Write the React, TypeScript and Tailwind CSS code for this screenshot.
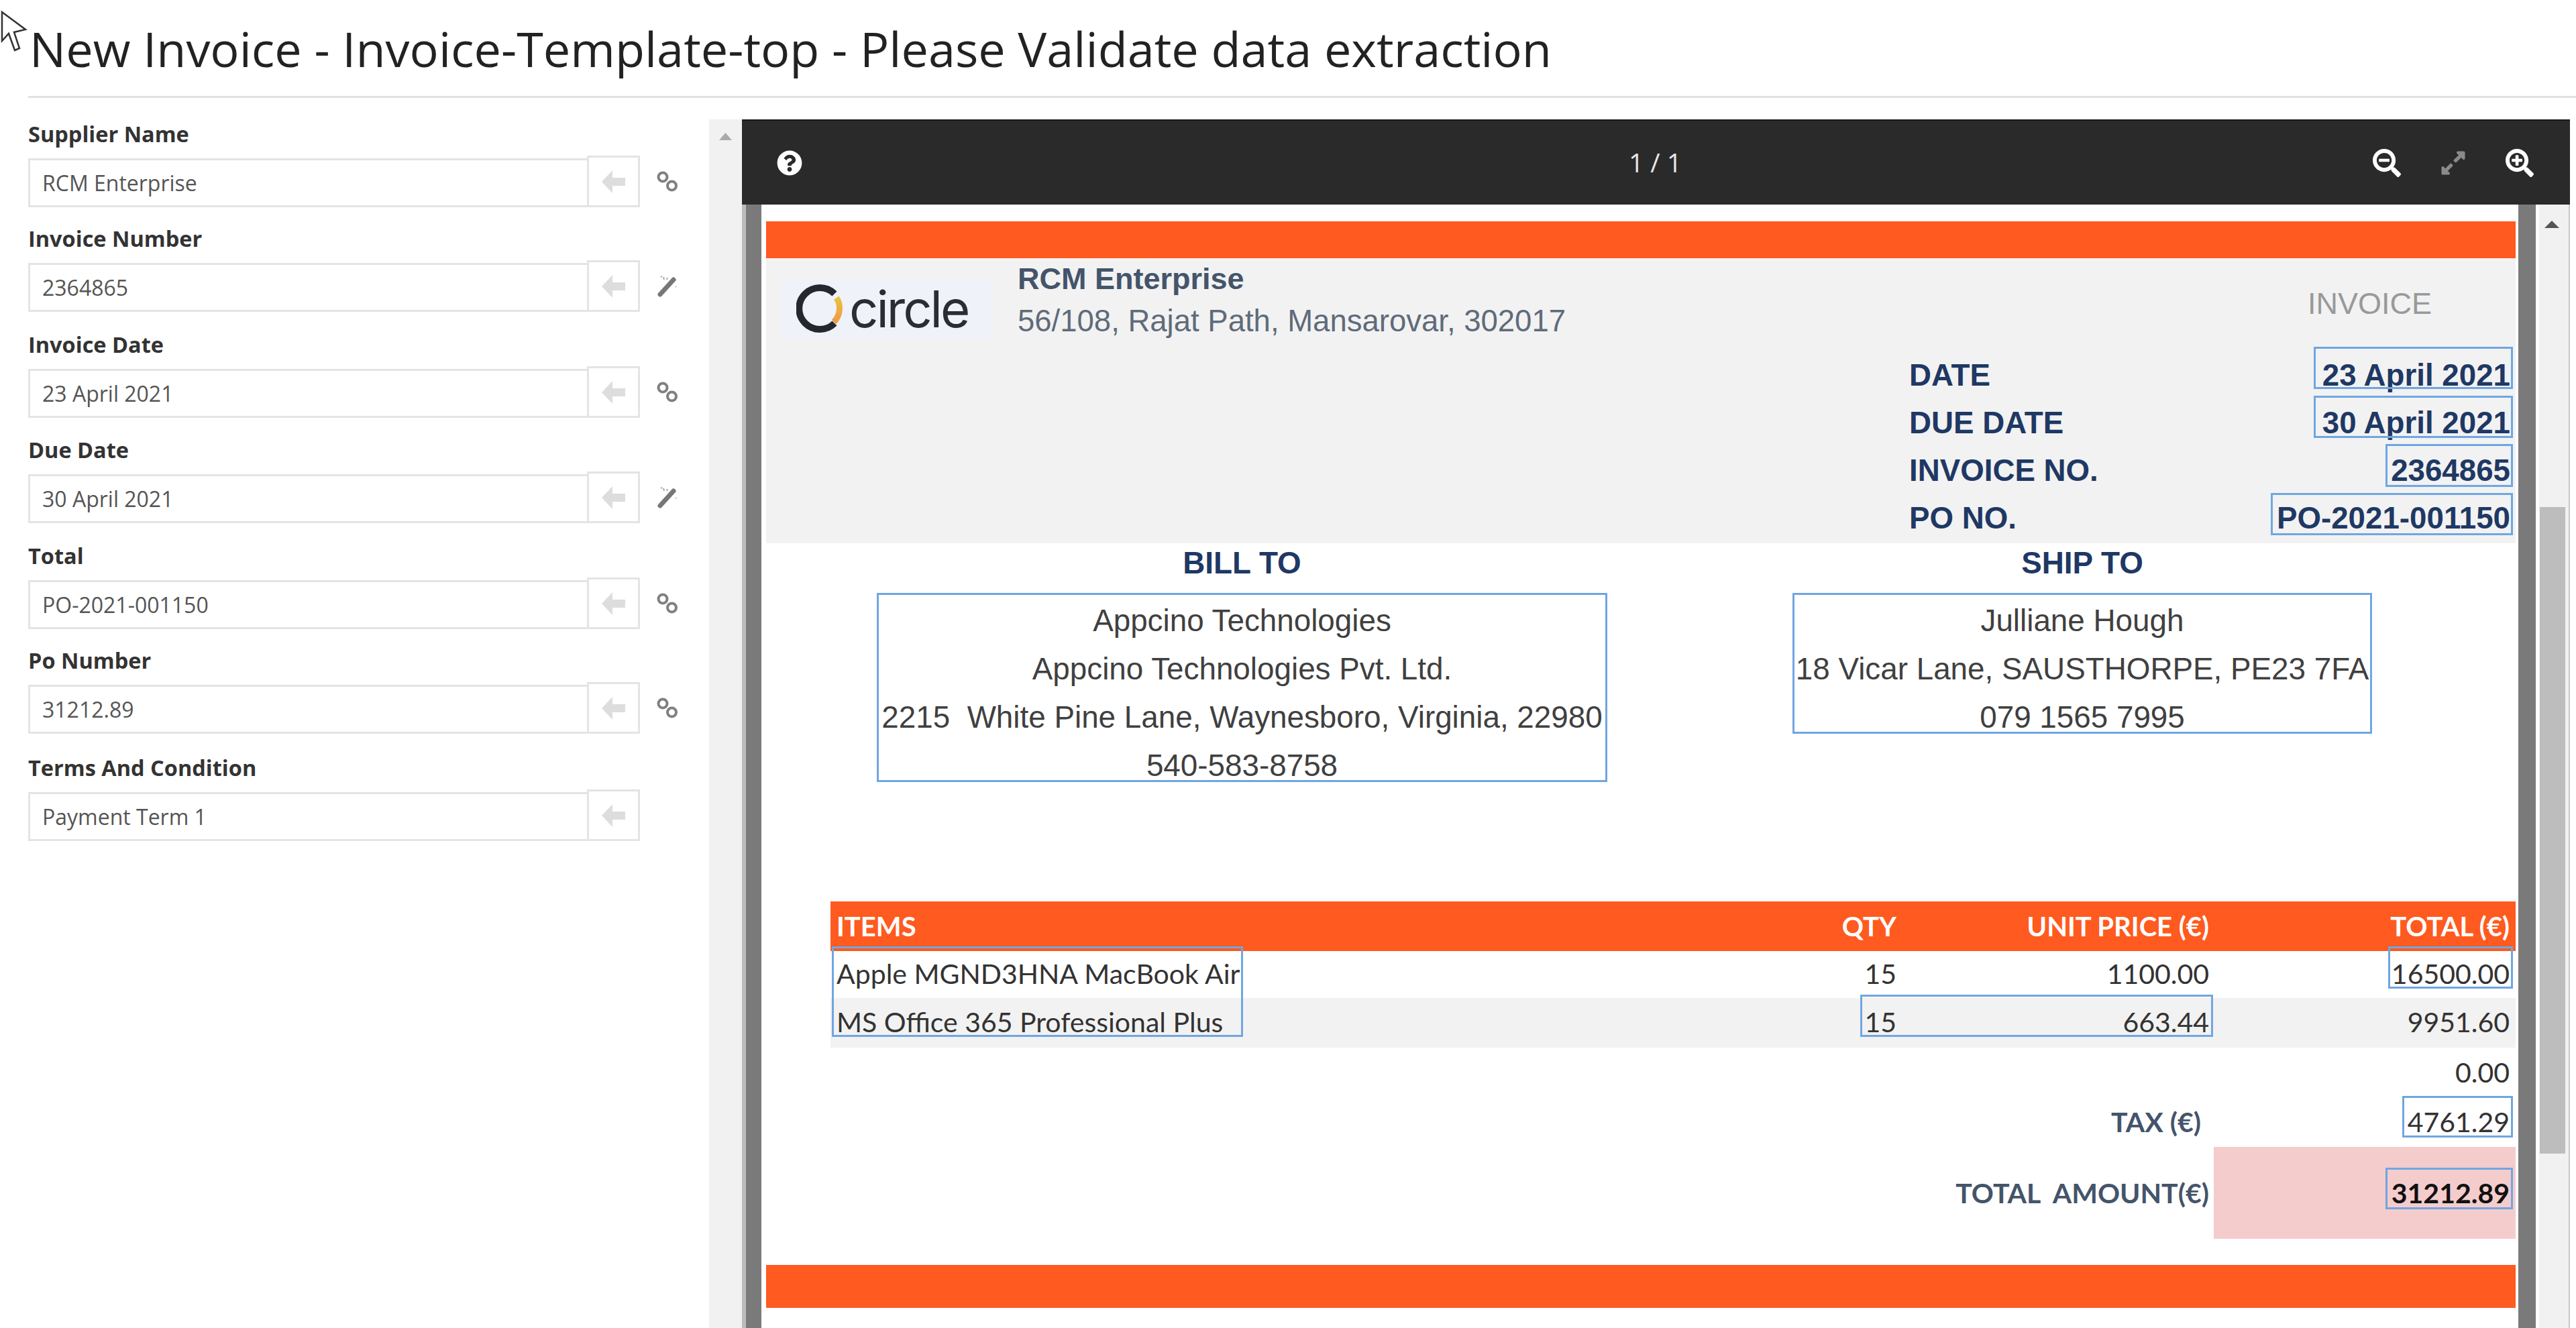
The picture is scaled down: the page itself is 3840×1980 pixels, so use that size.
import React from "react";
import { FaQuestionCircle, FaSearchMinus, FaSearchPlus, FaExpandAlt } from "react-icons/fa";

const fields = [
  { label: "Supplier Name", value: "RCM Enterprise", icon: "link", mt: "mt-[2px]" },
  { label: "Invoice Number", value: "2364865", icon: "wand", mt: "mt-[27px]" },
  { label: "Invoice Date", value: "23 April 2021", icon: "link", mt: "mt-[29px]" },
  { label: "Due Date", value: "30 April 2021", icon: "wand", mt: "mt-[28px]" },
  { label: "Total", value: "PO-2021-001150", icon: "link", mt: "mt-[29px]" },
  { label: "Po Number", value: "31212.89", icon: "link", mt: "mt-[27px]" },
  { label: "Terms And Condition", value: "Payment Term 1", icon: "", mt: "mt-[31px]" },
];

const boxes = [
  "left-[2314px] top-[212px] w-[297px] h-[63px]",
  "left-[2314px] top-[285px] w-[297px] h-[63px]",
  "left-[2421px] top-[357px] w-[190px] h-[64px]",
  "left-[2250px] top-[430px] w-[361px] h-[63px]",
  "left-[172px] top-[579px] w-[1089px] h-[282px]",
  "left-[1537px] top-[579px] w-[864px] h-[210px]",
  "left-[105px] top-[1106px] w-[613px] h-[135px]",
  "left-[2425px] top-[1106px] w-[186px] h-[63px]",
  "left-[1638px] top-[1178px] w-[526px] h-[63px]",
  "left-[2446px] top-[1329px] w-[165px] h-[62px]",
  "left-[2421px] top-[1436px] w-[190px] h-[62px]",
];

const meta = [
  ["DATE", "23 April 2021"],
  ["DUE DATE", "30 April 2021"],
  ["INVOICE NO.", "2364865"],
  ["PO NO.", "PO-2021-001150"],
];

const LinkIcon = () => (
  <svg width="31" height="31" viewBox="0 0 31 31" fill="none" stroke="#808080" strokeWidth="4">
    <circle cx="9" cy="9" r="6.5" />
    <circle cx="22.5" cy="22" r="6.5" />
  </svg>
);

const WandIcon = () => (
  <svg width="29" height="33" viewBox="0 0 29 33" fill="none">
    <path d="M4 29 L24 7" stroke="#777777" strokeWidth="7" strokeLinecap="round" />
    <path d="M9 3 L10 7 M5 2 L7 3 M15 4 L14 7 M27 17 L28 18" stroke="#aaaaaa" strokeWidth="2" />
  </svg>
);

const BackArrow = () => (
  <svg width="35" height="34" viewBox="0 0 35 34" fill="#dddddd">
    <path d="M0 17 L16 0 L16 11 L35 11 L35 23 L16 23 L16 34 Z" />
  </svg>
);

const Field = ({ label, value, icon, mt }: { label: string; value: string; icon: string; mt: string }) => (
  <div className={mt}>
    <div className="h-[40px] mb-[12px] flex items-center text-[32.5px] font-bold text-[#333333] leading-none">{label}</div>
    <div className="flex items-center h-[77px]">
      <div className="w-[833px] h-[73px] mt-[4px] border-[3px] border-r-0 border-[#e4e4e4] pl-[18px] flex items-center text-[32px] text-[#555555]">
        {value}
      </div>
      <div className="w-[79px] h-[77px] border-[3px] border-[#e4e4e4] flex items-center justify-center">
        <BackArrow />
      </div>
      <div className="ml-[25px] w-[31px] flex items-center justify-center">
        {icon === "link" && <LinkIcon />}
        {icon === "wand" && <WandIcon />}
      </div>
    </div>
  </div>
);

const Logo = () => (
  <div className="mt-[30px] w-[312px] h-[90px] bg-[#eff2f9] flex items-center pl-[22px]">
    <svg width="72" height="72" viewBox="0 0 72 72" fill="none">
      <defs>
        <linearGradient id="ring" x1="0" y1="0" x2="0" y2="1">
          <stop offset="0" stopColor="#e8c33f" />
          <stop offset="1" stopColor="#ee9a44" />
        </linearGradient>
      </defs>
      <path d="M57 14 A31 31 0 1 0 57 58" stroke="#24272f" strokeWidth="10" />
      <path d="M60 20 A29 29 0 0 1 56 56" stroke="url(#ring)" strokeWidth="9" />
    </svg>
    <span className="ml-[7px] font-['Inter',sans-serif] text-[76px] leading-none tracking-[-3px] text-[#2a2d36]">circle</span>
  </div>
);

const Row = ({
  item,
  qty,
  unit,
  total,
  cls,
}: {
  item?: string;
  qty?: string;
  unit?: string;
  total?: string;
  cls: string;
}) => (
  <div className={`flex items-center pr-[9px] ${cls}`}>
    <div className="flex-1 pl-[9px]">{item}</div>
    <div className="w-[150px] text-right">{qty}</div>
    <div className="w-[466px] text-right">{unit}</div>
    <div className="w-[448px] text-right">{total}</div>
  </div>
);

export default function App() {
  return (
    <div className="relative w-[3840px] h-[1980px] overflow-hidden bg-white font-['Open_Sans',sans-serif]">
      <svg className="absolute left-0 top-[15px]" width="42" height="64" viewBox="0 0 42 64" fill="#ffffff" stroke="#333333" strokeWidth="2.5">
        <path d="M3 3 L3 46 L13 35 L22 60 L29 57 L21 33 L38 29 Z" />
      </svg>

      <header className="h-[146px] ml-[42px] border-b-[3px] border-[#e0e0e0] flex items-center pl-[2px]">
        <h1 className="text-[72px] font-medium leading-none text-[#222222]">New Invoice - Invoice-Template-top - Please Validate data extraction</h1>
      </header>

      <div className="flex h-[1834px] pt-[32px]">
        <aside className="w-[1057px] pl-[42px]">
          {fields.map((f) => (
            <Field key={f.label} {...f} />
          ))}
        </aside>

        <div className="w-[49px] bg-[#f1f1f1] pt-[20px] pl-[15px]">
          <svg width="19" height="11" viewBox="0 0 19 11" fill="#aaaaaa">
            <path d="M9.5 0 L19 11 L0 11 Z" />
          </svg>
        </div>

        <main className="w-[2725px] flex flex-col font-['Liberation_Sans',Arial,sans-serif]">
          <div className="h-[127px] shrink-0 bg-[#2a2a2a] border-t-[2px] border-[#1a1a1a] flex items-center justify-between pl-[52px] pr-[54px] text-white">
            <FaQuestionCircle className="text-[38px]" />
            <div className="ml-[202px] font-['Open_Sans',sans-serif] text-[39px] text-[#e6e6e6]">1 / 1</div>
            <div className="flex items-center gap-[58px]">
              <FaSearchMinus className="text-[42px]" />
              <FaExpandAlt className="text-[40px] text-[#8a8a8a]" />
              <FaSearchPlus className="text-[42px]" />
            </div>
          </div>

          <div className="flex flex-1 min-h-0">
            <div className="w-[29px] bg-[#7a7a7a] border-l-[6px] border-[#bbbbbb]" />

            <div className="relative w-[2619px] pl-[7px] pt-[25px] bg-white overflow-hidden">
              <div className="w-[2608px] h-[55px] bg-[#ff5a1f]" />

              <section className="w-[2608px] h-[425px] bg-[#f2f2f2]">
                <div className="flex h-[125px]">
                  <div className="ml-[23px]">
                    <Logo />
                  </div>
                  <div className="ml-[40px]">
                    <div className="text-[45px] leading-[62px] font-bold text-[#44546a]">RCM Enterprise</div>
                    <div className="text-[45.5px] leading-[63px] text-[#5f6b7a]">56/108, Rajat Path, Mansarovar, 302017</div>
                  </div>
                  <div className="ml-auto mr-[125px] mt-[38px] text-[45px] leading-[60px] text-[#999999]">INVOICE</div>
                </div>
                <div className="mt-[14px] ml-[1704px] w-[896px]">
                  {meta.map(([k, v]) => (
                    <div key={k} className="flex justify-between text-[45.7px] leading-[71px] font-bold text-[#1f3864]">
                      <span>{k}</span>
                      <span>{v}</span>
                    </div>
                  ))}
                </div>
              </section>

              <section className="flex pl-[165px] gap-[276px] text-[45.8px] text-center h-[356px]">
                <div className="w-[1089px]">
                  <div className="leading-[60px] font-bold text-[#1f3864]">BILL TO</div>
                  <div className="mt-[20px] leading-[72px] text-[#404040] whitespace-pre">
                    <div>Appcino Technologies</div>
                    <div>Appcino Technologies Pvt. Ltd.</div>
                    <div>2215  White Pine Lane, Waynesboro, Virginia, 22980</div>
                    <div>540-583-8758</div>
                  </div>
                </div>
                <div className="w-[864px]">
                  <div className="leading-[60px] font-bold text-[#1f3864]">SHIP TO</div>
                  <div className="mt-[20px] leading-[72px] text-[#404040] whitespace-pre">
                    <div>Julliane Hough</div>
                    <div>18 Vicar Lane, SAUSTHORPE, PE23 7FA</div>
                    <div>079 1565 7995</div>
                  </div>
                </div>
              </section>

              <section className="mt-[178px] ml-[96px] w-[2512px] font-['Lato',sans-serif] text-[41px] text-[#333333]">
                <Row item="ITEMS" qty="QTY" unit="UNIT PRICE (€)" total="TOTAL (€)" cls="h-[74px] bg-[#ff5a1f] text-white text-[40px] font-bold" />
                <Row item="Apple MGND3HNA MacBook Air" qty="15" unit="1100.00" total="16500.00" cls="h-[70px] pb-[3px]" />
                <Row item="MS Office 365 Professional Plus" qty="15" unit="663.44" total="9951.60" cls="h-[74px] pb-[3px] bg-[#f2f2f2]" />
                <Row total="0.00" cls="h-[73px]" />
                <div className="flex items-center h-[75px] pr-[9px]">
                  <div className="flex-1 text-right pr-[19px] font-bold text-[#44546a]">TAX (€)</div>
                  <div className="w-[441px] text-right">4761.29</div>
                </div>
                <div className="flex items-center h-[137px]">
                  <div className="flex-1 text-right pr-[7px] font-bold text-[#44546a] whitespace-pre">TOTAL  AMOUNT(€)</div>
                  <div className="w-[450px] h-full bg-[#f4cccc] pr-[9px] flex items-center justify-end font-bold text-[#111111]">31212.89</div>
                </div>
              </section>

              <div className="mt-[39px] w-[2608px] h-[64px] bg-[#ff5a1f]" />

              {boxes.map((b) => (
                <div key={b} className={`absolute border-[3px] border-[#6fa6e2] ${b}`} />
              ))}
            </div>

            <div className="w-[26px] bg-[#7a7a7a]" />
            <div className="w-[5px] bg-white" />
            <div className="flex-1 bg-[#f1f1f1] border-r-[2px] border-[#c8c8c8] flex flex-col">
              <svg className="mt-[24px] ml-[8px]" width="22" height="11" viewBox="0 0 22 11" fill="#555555">
                <path d="M11 0 L22 11 L0 11 Z" />
              </svg>
              <div className="mt-[416px] w-[38px] ml-[1px] h-[964px] bg-[#bdbdbd]" />
            </div>
          </div>
        </main>
      </div>
    </div>
  );
}
